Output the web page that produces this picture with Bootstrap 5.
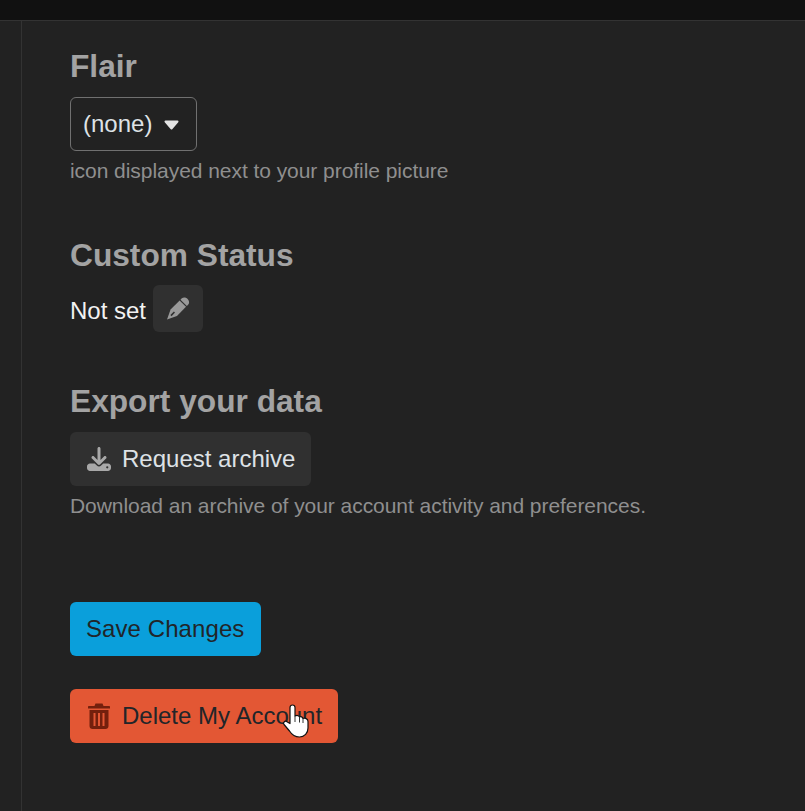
<!DOCTYPE html>
<html lang="en">
<head>
<meta charset="utf-8">
<title>Settings</title>
<link href="https://cdn.jsdelivr.net/npm/bootstrap@5.3.0/dist/css/bootstrap.min.css" rel="stylesheet">
<style>
html,body{height:100%;overflow:hidden}
body{background:#222;font-family:"Liberation Sans",Arial,sans-serif;font-size:24px;line-height:36px;color:#dee2e6}
.topstrip{height:21px;background:#111;border-bottom:1px solid #333}
.shell{height:790px}
.siderail{width:22px;border-right:1px solid #333;flex:none}
.pane{padding:27px 0 0 48px}
.sect-title{font-size:31.7px;line-height:37px;font-weight:700;color:#a3a3a3;margin:0 0 12px}
.sect-flair{margin-bottom:50px}
.sect-status{margin-bottom:51px}
.sect-status .sect-title{margin-bottom:11px}
.sect-export{margin-bottom:80px}
.hint{font-size:21px;line-height:32px;color:#8f8f8f;margin:0;letter-spacing:-.05px}
.dk-btn{font-size:24px;line-height:36px;padding:9px 18px;border-radius:6px;border:0;display:inline-flex;align-items:center}
.flair-btn{border:1px solid #707070;background:transparent;color:#dee2e6;padding:8px 12px;height:54px;width:127px}
.caret-mark{margin-left:11px;margin-top:2px}
.grey-btn{background:#303030;color:#dee2e6;padding:9px 16px 9px 17px}
.grey-btn svg{margin-right:11px}
.edit-btn{background:#303030;width:50px;height:47px;padding:0;justify-content:center;margin-left:7px}
.text-status{padding-top:5px;color:#f2f2f2}
.save-btn{background:#0a9fdb;color:#212529;padding:9px 17px 9px 16px;letter-spacing:.08px}
.del-btn{background:#e35734;color:#212529;padding-right:16px}
.del-btn svg{margin-right:12px}
.actions-block{margin-bottom:33px}
.cursor-mark{position:absolute;left:213px;top:15px}
</style>
</head>
<body>
<div class="topstrip"></div>
<div class="shell d-flex">
  <div class="siderail"></div>
  <main class="pane flex-grow-1">
    <section class="sect-flair">
      <h2 class="sect-title">Flair</h2>
      <button type="button" class="dk-btn flair-btn">(none)<svg class="caret-mark" width="17" height="10" viewBox="0 0 17 10"><path d="M2.500 1.500H14.500L8.500 8.500Z" fill="#e4e4e4" stroke="#e4e4e4" stroke-width="2" stroke-linejoin="round"/></svg></button>
      <p class="hint mt-1">icon displayed next to your profile picture</p>
    </section>
    <section class="sect-status">
      <h2 class="sect-title">Custom Status</h2>
      <div class="d-flex align-items-center">
        <span class="text-status">Not set</span>
        <button type="button" class="dk-btn edit-btn" aria-label="Edit">
          <svg width="24" height="24" viewBox="0 0 24 24"><g transform="translate(12 11.500) rotate(45)"><path d="M-4.500 -9.500C-4.500 -15 4.500 -15 4.500 -9.500V-8H-4.500Z" fill="#999"/><path d="M-4.500 -6.800H4.500V6L0 15.500L-4.500 6Z" fill="#999"/><path d="M-.8 5H.8V10H-.8Z" fill="#303030"/></g></svg>
        </button>
      </div>
    </section>
    <section class="sect-export">
      <h2 class="sect-title">Export your data</h2>
      <button type="button" class="dk-btn grey-btn">
        <svg width="24" height="24" viewBox="0 0 512 512" fill="#a8a8a8"><path d="M288 32c0-17.700-14.300-32-32-32s-32 14.300-32 32V274.700l-73.400-73.400c-12.500-12.500-32.800-12.500-45.300 0s-12.500 32.800 0 45.300l128 128c12.500 12.500 32.800 12.500 45.300 0l128-128c12.500-12.500 12.500-32.800 0-45.300s-32.800-12.500-45.300 0L288 274.700V32zM64 352c-35.300 0-64 28.700-64 64v32c0 35.300 28.700 64 64 64H448c35.300 0 64-28.700 64-64V416c0-35.300-28.700-64-64-64H346.500l-45.300 45.300c-25 25-65.500 25-90.500 0L165.500 352H64zm368 56a24 24 0 1 1 0 48 24 24 0 1 1 0-48z"/></svg>
        Request archive
      </button>
      <p class="hint mt-1">Download an archive of your account activity and preferences.</p>
    </section>
    <div class="actions-block">
      <button type="button" class="dk-btn save-btn">Save Changes</button>
    </div>
    <div class="actions-block2 position-relative">
      <button type="button" class="dk-btn del-btn">
        <svg width="22" height="26" viewBox="0 0 22 26" fill="#74200d"><path d="M7.500 0.500H14.500L15.500 3H21C21.600 3 22 3.400 22 4V5.500H0V4C0 3.400.4 3 1 3H6.500Z"/><path fill-rule="evenodd" d="M1.500 7H20.500V23C20.500 24.700 19.200 26 17.500 26H4.500C2.800 26 1.500 24.700 1.500 23ZM5.500 10V23H7.500V10ZM10 10V23H12V10ZM14.500 10V23H16.500V10Z"/></svg>
        Delete My Account
      </button>
      <svg class="cursor-mark" width="26" height="34" viewBox="0 0 26 34"><path d="M9.500 1C11 1 12 2 12 3.500V12C14 11 16 11.500 16.500 13C18 12.300 19.500 12.800 20 14.500C22 13.800 25 14.500 25 17.500V24C25 29 21.500 33 16.500 33C12 33 9 31 6.500 27L1 20.500C-.2 19 1.500 16.500 3.500 17.500L7 19.500V3.500C7 2 8 1 9.500 1Z" fill="#fff" stroke="#111" stroke-width="1.200" stroke-linejoin="round"/><path d="M12 12V18M16.500 13V18.500M20 14.500V19" stroke="#333" stroke-width="1" fill="none"/></svg>
    </div>
  </main>
</div>
<script src="https://cdn.jsdelivr.net/npm/bootstrap@5.3.0/dist/js/bootstrap.bundle.min.js"></script>
</body>
</html>
